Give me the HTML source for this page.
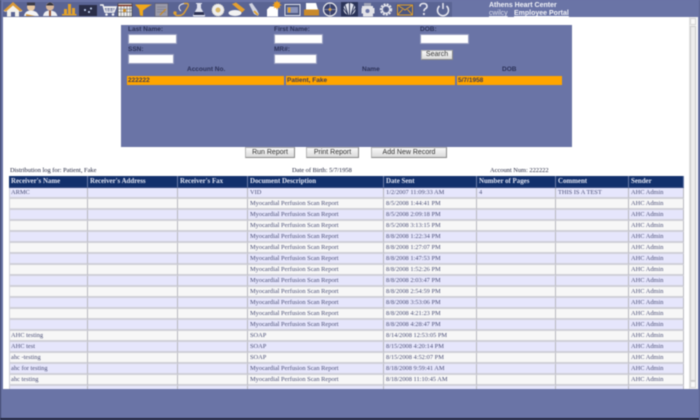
<!DOCTYPE html>
<html><head><meta charset="utf-8">
<style>
html,body{margin:0;padding:0;width:700px;height:420px;overflow:hidden;background:#6a74a6;}
#p{position:relative;width:700px;height:420px;background:#6a74a6;overflow:hidden;filter:blur(.4px);font-family:"Liberation Sans",sans-serif;}
.a{position:absolute;white-space:nowrap;}
.lb{font-size:6.5px;font-weight:bold;color:#2c3258;line-height:8px;}
.in{position:absolute;background:#fff;border:1px solid #9aa0c0;box-sizing:border-box;}
.btn{position:absolute;box-sizing:border-box;background:linear-gradient(#f8f8f8,#dcdcdc);border:1px solid #b4b4b4;border-right-color:#888;border-bottom-color:#888;font-size:7px;line-height:9px;color:#333;text-align:center;}
.or{position:absolute;background:#ffa500;top:76px;height:9px;font-size:6.5px;line-height:9px;font-weight:bold;color:#3c3c58;padding-left:1px;box-sizing:border-box;}
#t{position:absolute;left:9px;top:176px;width:675px;height:213px;overflow:hidden;}
table{border-collapse:separate;border-spacing:0;table-layout:fixed;width:675px;font-family:"Liberation Serif",serif;font-size:6.4px;color:#4c5078;}
td,th{height:11px;padding:0 0 0 2px;box-sizing:border-box;border-bottom:2px solid #d0d0d8;border-right:1px solid #b8b8be;overflow:hidden;white-space:nowrap;text-align:left;font-weight:normal;line-height:9px;}
td:first-child{border-left:1px solid #d0d0d8;padding-left:1px;}
th{background:#12306c;color:#dfe3f2;font-weight:bold;font-size:6.9px;height:12px;border-right:1px solid #6a7aa8;border-bottom:1px solid #33487e;}
th:first-child{padding-left:2px;}
tr.o td{background:#e6e6fc;}
tr.e td{background:#f7f7f7;}
.s{font-family:"Liberation Serif",serif;font-size:6.4px;color:#20243e;line-height:8px;font-weight:400;}
</style></head>
<body><div id="p">
<!-- frame -->
<div class="a" style="left:0;top:0;width:1px;height:420px;background:#3c4468"></div>
<div class="a" style="left:3px;top:17px;width:695px;height:372px;background:#fff"></div>
<div class="a" style="left:0;top:418px;width:700px;height:2px;background:#20243c"></div>
<div class="a" style="left:699px;top:0;width:1px;height:420px;background:#59628f"></div>
<!-- scrollbar -->
<div class="a" style="left:689px;top:17px;width:8px;height:372px;background:#f2f2f2;border-left:1px solid #e2e2e2;box-sizing:border-box"></div>
<div class="a" style="left:690px;top:18px;width:6px;height:7px;background:#f8f8f8;border:1px solid #d4d4d4;box-sizing:border-box"></div>
<div class="a" style="left:690px;top:26px;width:6px;height:355px;background:#ececec;border:1px solid #cccccc;box-sizing:border-box"></div>
<div class="a" style="left:690px;top:381px;width:6px;height:7px;background:#f8f8f8;border:1px solid #d4d4d4;box-sizing:border-box"></div>
<!-- icons -->
<svg class="a" style="left:0;top:0" width="460" height="18" viewBox="0 0 460 18">
<rect x="3" y="2" width="449" height="15" fill="#5a6493"/>
<path d="M13 3 L3.500 11 L6 12 L7 11 V16.500 H11 V12 H15 V16.500 H19 V11 L20 12 L22.500 11 Z" fill="#f4f2ec"/>
<path d="M13 2 L3.500 10.500 L6 11.500 L13 5.500 L20 11.500 L22.500 10.500 Z" fill="#d99a3a"/>
<circle cx="31" cy="7" r="4" fill="#e9c9a4"/><path d="M27 5.500 h8 v-3 h-8z" fill="#3a3a48"/><path d="M24 16 Q25 10.500 31 10.500 Q37 10.500 39 16Z" fill="#f4f4f6"/><path d="M26 14 l9 2h-9z" fill="#d99a3a"/>
<circle cx="50" cy="6.500" r="4" fill="#d9b89c"/><path d="M46 5.500 q4 -6 8 0z" fill="#33333c"/><path d="M43 16 Q44 10.500 50 10.500 Q56 10.500 57.500 16Z" fill="#eeeef0"/><path d="M49 10.500h2v5.500h-2z" fill="#9a5a40"/>
<path d="M62 14h2v-5h3v5h1v-10h3v10h1v-6h3v6h1.500v1.500h-14.500z" fill="#e2a22c"/>
<rect x="79" y="5" width="18" height="11" fill="#2a2e48"/><circle cx="85" cy="10" r="1" fill="#cfe0ff"/><circle cx="89" cy="12" r="1" fill="#cfe0ff"/><circle cx="91" cy="8.500" r="1" fill="#cfe0ff"/>
<path d="M100 5h3l2 7h9l2-5h-12" fill="none" stroke="#f4f4f4" stroke-width="1.400"/><path d="M104 8h11M105 10h9M107 7v5M110 7v5M113 7v5" stroke="#eeeeee" stroke-width=".7"/><circle cx="106.500" cy="14.500" r="1.300" fill="#f4f4f4"/><circle cx="113" cy="14.500" r="1.300" fill="#f4f4f4"/>
<rect x="118" y="3.500" width="14" height="13" fill="#efefef" stroke="#333" stroke-width=".6"/><path d="M118 5.500h14" stroke="#7a3020" stroke-width="1.500"/><path d="M121 6v10M124 6v10M127 6v10M130 6v10M118 9h14M118 12h14" stroke="#555" stroke-width=".5"/><rect x="123" y="9" width="3" height="3" fill="#c98a24"/>
<path d="M135 4.500h17l-5 3-4 3v5.500l-3-.5-1-6.500z" fill="#f0a81c"/>
<rect x="155" y="3.500" width="13" height="13" fill="#9a9aaa" stroke="#5c5c70" stroke-width=".7"/><path d="M157 7h9M157 9.500h9M157 12h9" stroke="#6c6c80" stroke-width=".6"/><path d="M160 15l6-6" stroke="#c98a24" stroke-width="1.200"/>
<path d="M184 3.500h3q2 0 1 3l-3 5q-2 4-6 4h-2q-2 0-2-2.500" fill="none" stroke="#dca036" stroke-width="1.400"/><path d="M184 3.500q-5 1-5 4 0 2 2 3.500" fill="none" stroke="#e8e8f0" stroke-width="1"/><circle cx="175" cy="13" r="1.700" fill="#dca036"/>
<path d="M196 3h6v1h-1v4l4 7q.5 1.500-1 1.500h-10q-1.500 0-1-1.500l4-7v-4h-1z" fill="#dfe2ee"/><path d="M194.500 12h9l1 3h-11z" fill="#2c3254"/>
<circle cx="218" cy="10" r="6" fill="#eee" stroke="#dcd8c8" stroke-dasharray="1 1" stroke-width="1"/><circle cx="218" cy="10" r="2.500" fill="#d9b86a"/>
<path d="M232 4l4-1.500 9 7-3 3z" fill="#e4a030"/><ellipse cx="235" cy="13" rx="6.500" ry="3" fill="#f2f2f2"/>
<path d="M249 4l3-1 5 7 2 4-1 2-4-2z" fill="#cfd2e0"/><path d="M254 11l4 4" stroke="#e0a030" stroke-width="1.800"/>
<path d="M270 6.500h8v10h-11v-7z" fill="#fff"/><circle cx="277" cy="5" r="3.200" fill="#f0a020"/><path d="M277 .500v9M272.500 5h9M274 2l6 6M280 2l-6 6" stroke="#f0a020" stroke-width=".8"/>
<rect x="285" y="4.500" width="15" height="11" fill="#4b567f" stroke="#dfe2ee" stroke-width="1"/><rect x="287" y="7" width="11" height="6" fill="#8a93ba"/><path d="M288 7.500h2.500v5h-2.500z" fill="#e0a030"/>
<path d="M306 3h10l2 6.500h-12z" fill="#fff"/><rect x="304" y="9.500" width="15" height="6" fill="#c98a2c"/>
<circle cx="330" cy="9.500" r="6.500" fill="#39416c" stroke="#eee" stroke-width="1.200"/><path d="M330 3v13M323.500 9.500h13" stroke="#ccd" stroke-width=".5"/><circle cx="330" cy="9.500" r="1.500" fill="#d9a64a"/>
<rect x="341" y="2" width="17" height="14.500" fill="#2a3358"/><circle cx="349.500" cy="9" r="6" fill="#dfe2ee"/><path d="M349.500 3v12M345 5l3 10M354 5l-3 10M343.500 8l4 6M355.500 8l-4 6" stroke="#2a3358" stroke-width="1"/>
<path d="M362 6h11v2h1.500v5.500h-1.500v3h-10v-3h-1.500v-5.500h.5z" fill="#e3e3e8"/><rect x="364" y="3" width="7" height="3" fill="#9ea2b6"/><circle cx="367.500" cy="11" r="2" fill="#6a74a6"/>
<circle cx="386" cy="9.500" r="5" fill="none" stroke="#e2e3ea" stroke-width="2.400" stroke-dasharray="2 1"/><circle cx="386" cy="9.500" r="3.800" fill="none" stroke="#e2e3ea" stroke-width="1.400"/><circle cx="386" cy="9.500" r="1.600" fill="#4c5680"/>
<rect x="396" y="4" width="18" height="12" fill="#4b567f"/><rect x="397.500" y="5" width="15" height="10" fill="none" stroke="#dc9e34" stroke-width="1"/><path d="M397.500 5l7.500 5 7.500-5M397.500 15l5-5.500M412.500 15l-5-5.500" fill="none" stroke="#dc9e34" stroke-width="1"/>
<path d="M420 6.500q0-3 3.500-3t3.500 3q0 1.500-2 2.500-1 .6-1 2.200" fill="none" stroke="#e8e8f0" stroke-width="1.600"/><rect x="423" y="13" width="1.800" height="2" fill="#e8e8f0"/>
<path d="M439.500 6a5.500 5.500 0 1 0 7 0" fill="none" stroke="#e8e8f0" stroke-width="1.500"/><path d="M443 3v6" stroke="#e8e8f0" stroke-width="1.500"/>
</svg>
<!-- header text -->
<div class="a" style="left:489px;top:1px;font-size:7px;line-height:9px;font-weight:bold;color:#f2f3f8">Athens Heart Center</div>
<div class="a" style="left:489px;top:9px;font-size:7px;line-height:9px;color:#dfe2ee;text-decoration:underline">cwilcy</div>
<div class="a" style="left:514px;top:9px;font-size:7px;line-height:9px;font-weight:bold;color:#f2f3f8;text-decoration:underline">Employee Portal</div>
<!-- search panel -->
<div class="a" style="left:121px;top:25px;width:451px;height:122px;background:#6a74a6"></div>
<div class="a lb" style="left:128px;top:26px">Last Name:</div>
<div class="in" style="left:128px;top:34px;width:49px;height:10px"></div>
<div class="a lb" style="left:128px;top:46px">SSN:</div>
<div class="in" style="left:128px;top:54px;width:46px;height:10px"></div>
<div class="a lb" style="left:274px;top:26px">First Name:</div>
<div class="in" style="left:274px;top:34px;width:49px;height:10px"></div>
<div class="a lb" style="left:274px;top:46px">MR#:</div>
<div class="in" style="left:274px;top:54px;width:43px;height:10px"></div>
<div class="a lb" style="left:420px;top:26px">DOB:</div>
<div class="in" style="left:420px;top:34px;width:49px;height:10px"></div>
<div class="btn" style="left:421px;top:50px;width:32px;height:10px;line-height:8px">Search</div>
<div class="a lb" style="left:187px;top:66px">Account No.</div>
<div class="a lb" style="left:362px;top:66px">Name</div>
<div class="a lb" style="left:502px;top:66px">DOB</div>
<div class="or" style="left:127px;width:157px">222222</div>
<div class="or" style="left:286px;width:169px">Patient, Fake</div>
<div class="or" style="left:457px;width:105px">5/7/1958</div>
<!-- buttons -->
<div class="btn" style="left:245px;top:147px;width:50px;height:11px">Run Report</div>
<div class="btn" style="left:306px;top:147px;width:53px;height:11px">Print Report</div>
<div class="btn" style="left:371px;top:147px;width:76px;height:11px">Add New Record</div>
<!-- summary -->
<div class="a s" style="left:10px;top:167px">Distribution log for: Patient, Fake</div>
<div class="a s" style="left:292px;top:167px">Date of Birth: 5/7/1958</div>
<div class="a s" style="left:490px;top:167px">Account Num: 222222</div>
<!-- table -->
<div id="t"><table>
<colgroup><col style="width:79px"><col style="width:90px"><col style="width:70px"><col style="width:136px"><col style="width:93px"><col style="width:79px"><col style="width:73px"><col style="width:55px"></colgroup>
<tr><th>Receiver's Name</th><th>Receiver's Address</th><th>Receiver's Fax</th><th>Document Description</th><th>Date Sent</th><th>Number of Pages</th><th>Comment</th><th>Sender</th></tr>
<tr class="o"><td>ARMC</td><td></td><td></td><td>VID</td><td>1/2/2007 11:09:33 AM</td><td>4</td><td>THIS IS A TEST</td><td>AHC Admin</td></tr>
<tr class="e"><td></td><td></td><td></td><td>Myocardial Perfusion Scan Report</td><td>8/5/2008 1:44:41 PM</td><td></td><td></td><td>AHC Admin</td></tr>
<tr class="o"><td></td><td></td><td></td><td>Myocardial Perfusion Scan Report</td><td>8/5/2008 2:09:18 PM</td><td></td><td></td><td>AHC Admin</td></tr>
<tr class="e"><td></td><td></td><td></td><td>Myocardial Perfusion Scan Report</td><td>8/5/2008 3:13:15 PM</td><td></td><td></td><td>AHC Admin</td></tr>
<tr class="o"><td></td><td></td><td></td><td>Myocardial Perfusion Scan Report</td><td>8/8/2008 1:22:34 PM</td><td></td><td></td><td>AHC Admin</td></tr>
<tr class="e"><td></td><td></td><td></td><td>Myocardial Perfusion Scan Report</td><td>8/8/2008 1:27:07 PM</td><td></td><td></td><td>AHC Admin</td></tr>
<tr class="o"><td></td><td></td><td></td><td>Myocardial Perfusion Scan Report</td><td>8/8/2008 1:47:53 PM</td><td></td><td></td><td>AHC Admin</td></tr>
<tr class="e"><td></td><td></td><td></td><td>Myocardial Perfusion Scan Report</td><td>8/8/2008 1:52:26 PM</td><td></td><td></td><td>AHC Admin</td></tr>
<tr class="o"><td></td><td></td><td></td><td>Myocardial Perfusion Scan Report</td><td>8/8/2008 2:03:47 PM</td><td></td><td></td><td>AHC Admin</td></tr>
<tr class="e"><td></td><td></td><td></td><td>Myocardial Perfusion Scan Report</td><td>8/8/2008 2:54:59 PM</td><td></td><td></td><td>AHC Admin</td></tr>
<tr class="o"><td></td><td></td><td></td><td>Myocardial Perfusion Scan Report</td><td>8/8/2008 3:53:06 PM</td><td></td><td></td><td>AHC Admin</td></tr>
<tr class="e"><td></td><td></td><td></td><td>Myocardial Perfusion Scan Report</td><td>8/8/2008 4:21:23 PM</td><td></td><td></td><td>AHC Admin</td></tr>
<tr class="o"><td></td><td></td><td></td><td>Myocardial Perfusion Scan Report</td><td>8/8/2008 4:28:47 PM</td><td></td><td></td><td>AHC Admin</td></tr>
<tr class="e"><td>AHC testing</td><td></td><td></td><td>SOAP</td><td>8/14/2008 12:53:05 PM</td><td></td><td></td><td>AHC Admin</td></tr>
<tr class="o"><td>AHC test</td><td></td><td></td><td>SOAP</td><td>8/15/2008 4:20:14 PM</td><td></td><td></td><td>AHC Admin</td></tr>
<tr class="e"><td>ahc -testing</td><td></td><td></td><td>SOAP</td><td>8/15/2008 4:52:07 PM</td><td></td><td></td><td>AHC Admin</td></tr>
<tr class="o"><td>ahc for testing</td><td></td><td></td><td>Myocardial Perfusion Scan Report</td><td>8/18/2008 9:59:41 AM</td><td></td><td></td><td>AHC Admin</td></tr>
<tr class="e"><td>ahc testing</td><td></td><td></td><td>Myocardial Perfusion Scan Report</td><td>8/18/2008 11:10:45 AM</td><td></td><td></td><td>AHC Admin</td></tr>
<tr class="o"><td></td><td></td><td></td><td></td><td></td><td></td><td></td><td></td></tr>
</table></div>
</div></body></html>
